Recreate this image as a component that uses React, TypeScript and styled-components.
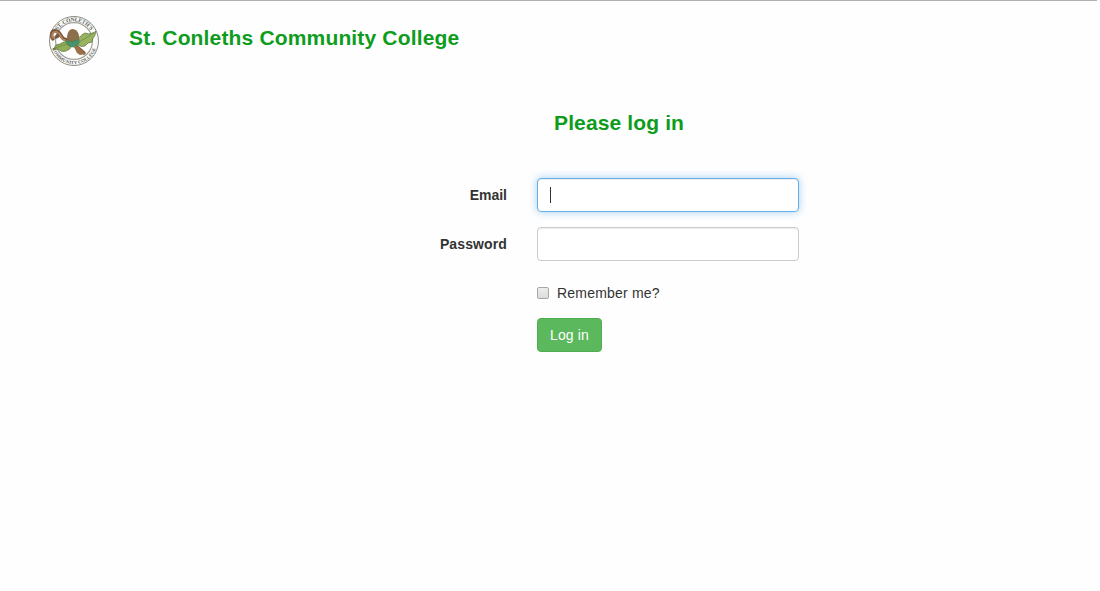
import React from "react";
import styled, { createGlobalStyle } from "styled-components";

const GlobalStyle = createGlobalStyle`
  *, *::before, *::after { box-sizing: border-box; }
  body {
    margin: 0;
    background: #fefefe;
    color: #333;
    font: 14px/20px "Liberation Sans", Arial, sans-serif;
  }
`;

const Page = styled.div`
  max-width: 1097px;
  min-height: 591px;
  border-top: 1px solid #b1b1b1;
`;

const Header = styled.header`
  display: flex;
  align-items: flex-start;
  gap: 29px;
  padding: 14px 0 0 48px;
  height: 109px;
`;

const Logo = styled.svg`
  display: block;
  width: 52px;
  height: 52px;
`;

const Title = styled.h1`
  margin: 11px 0 0;
  color: #0e9c1c;
  font-size: 21px;
  line-height: 24px;
  letter-spacing: 0.16px;
`;

const Heading = styled.h2`
  margin: 0 0 42px 554px;
  color: #0e9c1c;
  font-size: 21px;
  line-height: 26px;
  letter-spacing: 0.13px;
`;

const Form = styled.form`
  display: grid;
  grid-template-columns: 507px 262px;
  column-gap: 30px;
`;

const Label = styled.label<{ $spacing: number }>`
  padding-top: 7px;
  text-align: right;
  font-weight: bold;
  letter-spacing: ${(p) => p.$spacing}px;
`;

const Field = styled.div<{ $focused?: boolean }>`
  display: flex;
  align-items: center;
  height: 34px;
  margin-bottom: 15px;
  padding: 0 12px;
  background: #fff;
  border: 1px solid ${(p) => (p.$focused ? "#66afe9" : "#ccc")};
  border-radius: 4px;
  box-shadow: inset 0 1px 1px rgba(0, 0, 0, 0.075)
    ${(p) => (p.$focused ? ", 0 0 8px rgba(102, 175, 233, 0.6)" : "")};
`;

const Caret = styled.span`
  width: 1px;
  height: 16px;
  background: #333;
`;

const Remember = styled.label`
  grid-column: 2;
  display: flex;
  align-items: center;
  gap: 8px;
  height: 20px;
  margin: 7px 0 15px;
  letter-spacing: 0.2px;
`;

const Checkbox = styled.span`
  width: 12px;
  height: 12px;
  border: 1px solid #a6a6a6;
  border-radius: 2px;
  background: linear-gradient(#ededed, #dcdcdc);
`;

const Button = styled.button`
  grid-column: 2;
  justify-self: start;
  width: 65px;
  height: 34px;
  padding: 0;
  color: #fff;
  background: #5cb85c;
  border: 1px solid #4cae4c;
  border-radius: 4px;
  font: inherit;
  letter-spacing: 0.15px;
`;

const Crest = () => (
  <Logo viewBox="0 0 52 52" aria-label="St. Conleths Community College">
    <defs>
      <path id="arc-top" d="M6.4 26a19.6 19.6 0 0 1 39.2 0" />
      <path id="arc-bottom" d="M2.8 26a23.2 23.2 0 0 0 46.4 0" />
    </defs>
    <circle cx="26" cy="26" r="24.5" fill="#fafaf8" stroke="#8c8c86" strokeWidth="1" />
    <circle cx="26" cy="26" r="18.4" fill="#fff" stroke="#a2a29a" strokeWidth="1.2" />
    <g fill="none" strokeLinecap="round">
      <path d="M5 24c-3-4-1-9 3-8 4 1 3 5 0 6M8 16c5 1 4 6 8 8 5 1 8 3 12 7l8 7" stroke="#77583c" strokeWidth="3.4" />
      <path d="M5 23c-2-3 0-7 3-6M9 17c4 1 3 6 7 8 5 1 8 3 12 7l7 6" stroke="#b4835a" strokeWidth="1.800" />
    </g>
    <path d="M21 27c-3-1-6 0-9 2l-4 1-3 5 5-1 3 2c3 1 5 0 7-1 3-1 3-4 4-6z" fill="#91ad59" stroke="#68793f" strokeWidth=".8" />
    <path d="M27 29c3-6 6-9 10-11l4 1c3-1 5-1 7-3-1 4-1 5-3 7l-1 4-4 1-3 3c-3 1-6 0-8-2z" fill="#98b360" stroke="#68793f" strokeWidth=".8" />
    <path d="M22 28l-15 5M28 29l18-11" stroke="#667c43" strokeWidth=".6" />
    <path d="M19 23c0-6 3-9 5.500-9 4 0 7 4 6.500 9l-1 3-8 1z" fill="#8c704b" />
    <path d="M18 25c4 2 9 2 13-1 1 5-2 8-6 8-4 0-7-3-7-7z" fill="#469568" stroke="#4c7554" strokeWidth=".6" />
    <path d="M26 32l4-1 7 8-5 1-3-2z" fill="#9e7048" />
    <g fill="#5b5b56" fontFamily="Liberation Serif, serif" fontWeight="bold" textAnchor="middle">
      <text fontSize="5.600">
        <textPath href="#arc-top" startOffset="50%" textLength="39">ST. CONLETH'S</textPath>
      </text>
      <text fontSize="4.600">
        <textPath href="#arc-bottom" startOffset="50%" textLength="57">COMMUNITY COLLEGE</textPath>
      </text>
    </g>
  </Logo>
);

export default function App() {
  return (
    <>
      <GlobalStyle />
      <Page>
        <Header>
          <Crest />
          <Title>St. Conleths Community College</Title>
        </Header>
        <Heading>Please log in</Heading>
        <Form>
          <Label $spacing={0}>Email</Label>
          <Field $focused>
            <Caret />
          </Field>
          <Label $spacing={0.12}>Password</Label>
          <Field />
          <Remember>
            <Checkbox />
            Remember me?
          </Remember>
          <Button type="button">Log in</Button>
        </Form>
      </Page>
    </>
  );
}
